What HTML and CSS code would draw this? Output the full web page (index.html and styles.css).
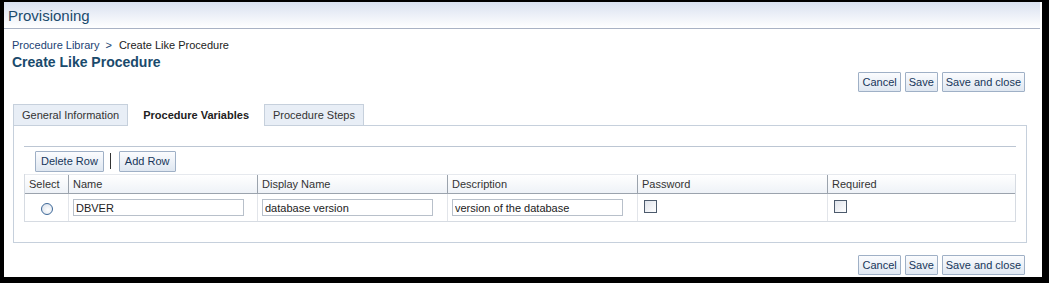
FILE: index.html
```html
<!DOCTYPE html>
<html>
<head>
<meta charset="utf-8">
<link rel="stylesheet" href="styles.css">
</head>
<body>
<div class="frame">
  <div class="header"><span class="header-title">Provisioning</span></div>
  <div class="crumbs"><a class="crumb-link">Procedure Library</a><span class="crumb-sep">&gt;</span><span>Create Like Procedure</span></div>
  <div class="page-title">Create Like Procedure</div>
  <div class="actions">
    <button class="btn">Cancel</button>
    <button class="btn">Save</button>
    <button class="btn">Save and close</button>
  </div>
  <div class="tabs">
    <div class="tab">General Information</div>
    <div class="tab active">Procedure Variables</div>
    <div class="tab">Procedure Steps</div>
    <div class="tab-fill"></div>
  </div>
  <div class="panel">
    <div class="panel-rule"></div>
    <div class="toolbar">
      <button class="btn">Delete Row</button>
      <span class="tb-sep"></span>
      <button class="btn">Add Row</button>
    </div>
    <div class="table">
      <div class="thead">
        <div class="th c-sel">Select</div>
        <div class="th c-col first">Name</div>
        <div class="th c-col">Display Name</div>
        <div class="th c-col">Description</div>
        <div class="th c-col">Password</div>
        <div class="th c-col last">Required</div>
      </div>
      <div class="trow">
        <div class="td c-sel"><span class="radio"></span></div>
        <div class="td c-col first"><input class="field" value="DBVER"></div>
        <div class="td c-col"><input class="field" value="database version"></div>
        <div class="td c-col"><input class="field" value="version of the database"></div>
        <div class="td c-col"><span class="check"></span></div>
        <div class="td c-col last"><span class="check"></span></div>
      </div>
    </div>
  </div>
  <div class="actions bottom">
    <button class="btn">Cancel</button>
    <button class="btn">Save</button>
    <button class="btn">Save and close</button>
  </div>
</div>
</body>
</html>
```

FILE: styles.css
```css
* { box-sizing: border-box; }
html, body { margin: 0; padding: 0; background: #000; }
body { font-family: "Liberation Sans", Arial, sans-serif; font-size: 11px; color: #222; }
.frame {
  margin: 2px 7px 0 4px;
  height: 275px;
  background: #fff;
  overflow: hidden;
}
.header {
  height: 27px;
  margin-right: 2px;
  background: linear-gradient(#d9e1f0, #ffffff);
  border-bottom: 1px solid #a9b2c4;
  padding-left: 4px;
  padding-top: 5px;
}
.header-title { font-size: 15px; color: #1a4a6c; }
.crumbs { margin-top: 9px; padding-left: 8px; height: 14px; line-height: 14px; color: #222; }
.crumb-link { color: #1b3f73; }
.crumb-sep { margin: 0 7px 0 6px; color: #1b3f73; }
.page-title { padding-left: 8px; margin-top: 1px; font-size: 14px; font-weight: bold; color: #1a4a6c; height: 18px; line-height: 18px; }
.actions { display: flex; justify-content: flex-end; gap: 4px; padding-right: 17px; margin-top: 1px; height: 20px; }
.btn {
  font-family: "Liberation Sans", Arial, sans-serif;
  font-size: 11px;
  color: #17365a;
  height: 20px;
  padding: 0 3px;
  border: 1px solid #9fb0c6;
  border-radius: 1px;
  background: linear-gradient(#fbfcfe, #dfe7f1);
}
.tabs { display: flex; margin-top: 12px; margin-left: 9px; height: 22px; }
.tab {
  height: 22px;
  line-height: 20px;
  padding: 0 8px;
  color: #333;
  background: #e8eef6;
  border: 1px solid #c6d0dc;
}
.tab.active { background: #fff; font-weight: bold; color: #222; border-color: #fff; border-bottom-color: #fff; padding: 0 14px; }
.tab-fill { flex: 1; border-bottom: 1px solid #c6d0dc; margin-right: 15px; }
.panel {
  margin-left: 9px;
  margin-right: 15px;
  height: 117px;
  border: 1px solid #c6d0dc;
  border-top: none;
  padding: 20px 10px 0 10px;
}
.panel-rule { height: 1px; background: #bcc6d3; }
.toolbar { display: flex; align-items: center; padding-left: 11px; margin-top: 3px; height: 22px; }
.tb-sep { width: 1px; height: 16px; background: #333; margin: 0 8px 0 6px; }
.toolbar .btn { height: 21px; padding: 0 5px; }
.table { margin-top: 2px; border: 1px solid #d6dbe2; border-top: none; }
.thead { display: flex; height: 20px; background: linear-gradient(#ffffff, #eef2f7); border-bottom: 1px solid #9ba3ad; border-top: 1px solid #e6e9ee; }
.th { line-height: 19px; color: #333; padding-left: 4px; border-left: 1px solid #9ba3ad; }
.th.c-sel { border-left: none; padding-left: 4px; }
.trow { display: flex; height: 27px; }
.td { border-left: 1px solid #e2e5ea; display: flex; align-items: center; padding-left: 4px; }
.td.c-sel { border-left: none; justify-content: center; padding-left: 0; }
.c-sel { width: 43px; }
.c-col { width: 190px; }
.c-col.first { width: 189px; }
.c-col.last { flex: 1; }
.field {
  width: 171px;
  height: 17px;
  border: 1px solid #b8c0ca;
  font-family: "Liberation Sans", Arial, sans-serif;
  font-size: 11px;
  color: #222;
  padding: 0 2px;
}
.radio { width: 12px; height: 12px; border-radius: 50%; border: 1px solid #3d6898; background: radial-gradient(circle at 60% 60%, #ffffff, #d5dde8); margin-top: 3px; }
.check { width: 13px; height: 13px; border: 1px solid #4c5a6c; background: linear-gradient(135deg, #dfe3ea, #ffffff); margin-left: 2px; margin-top: -2px; }
.actions.bottom { margin-top: 12px; }
```
